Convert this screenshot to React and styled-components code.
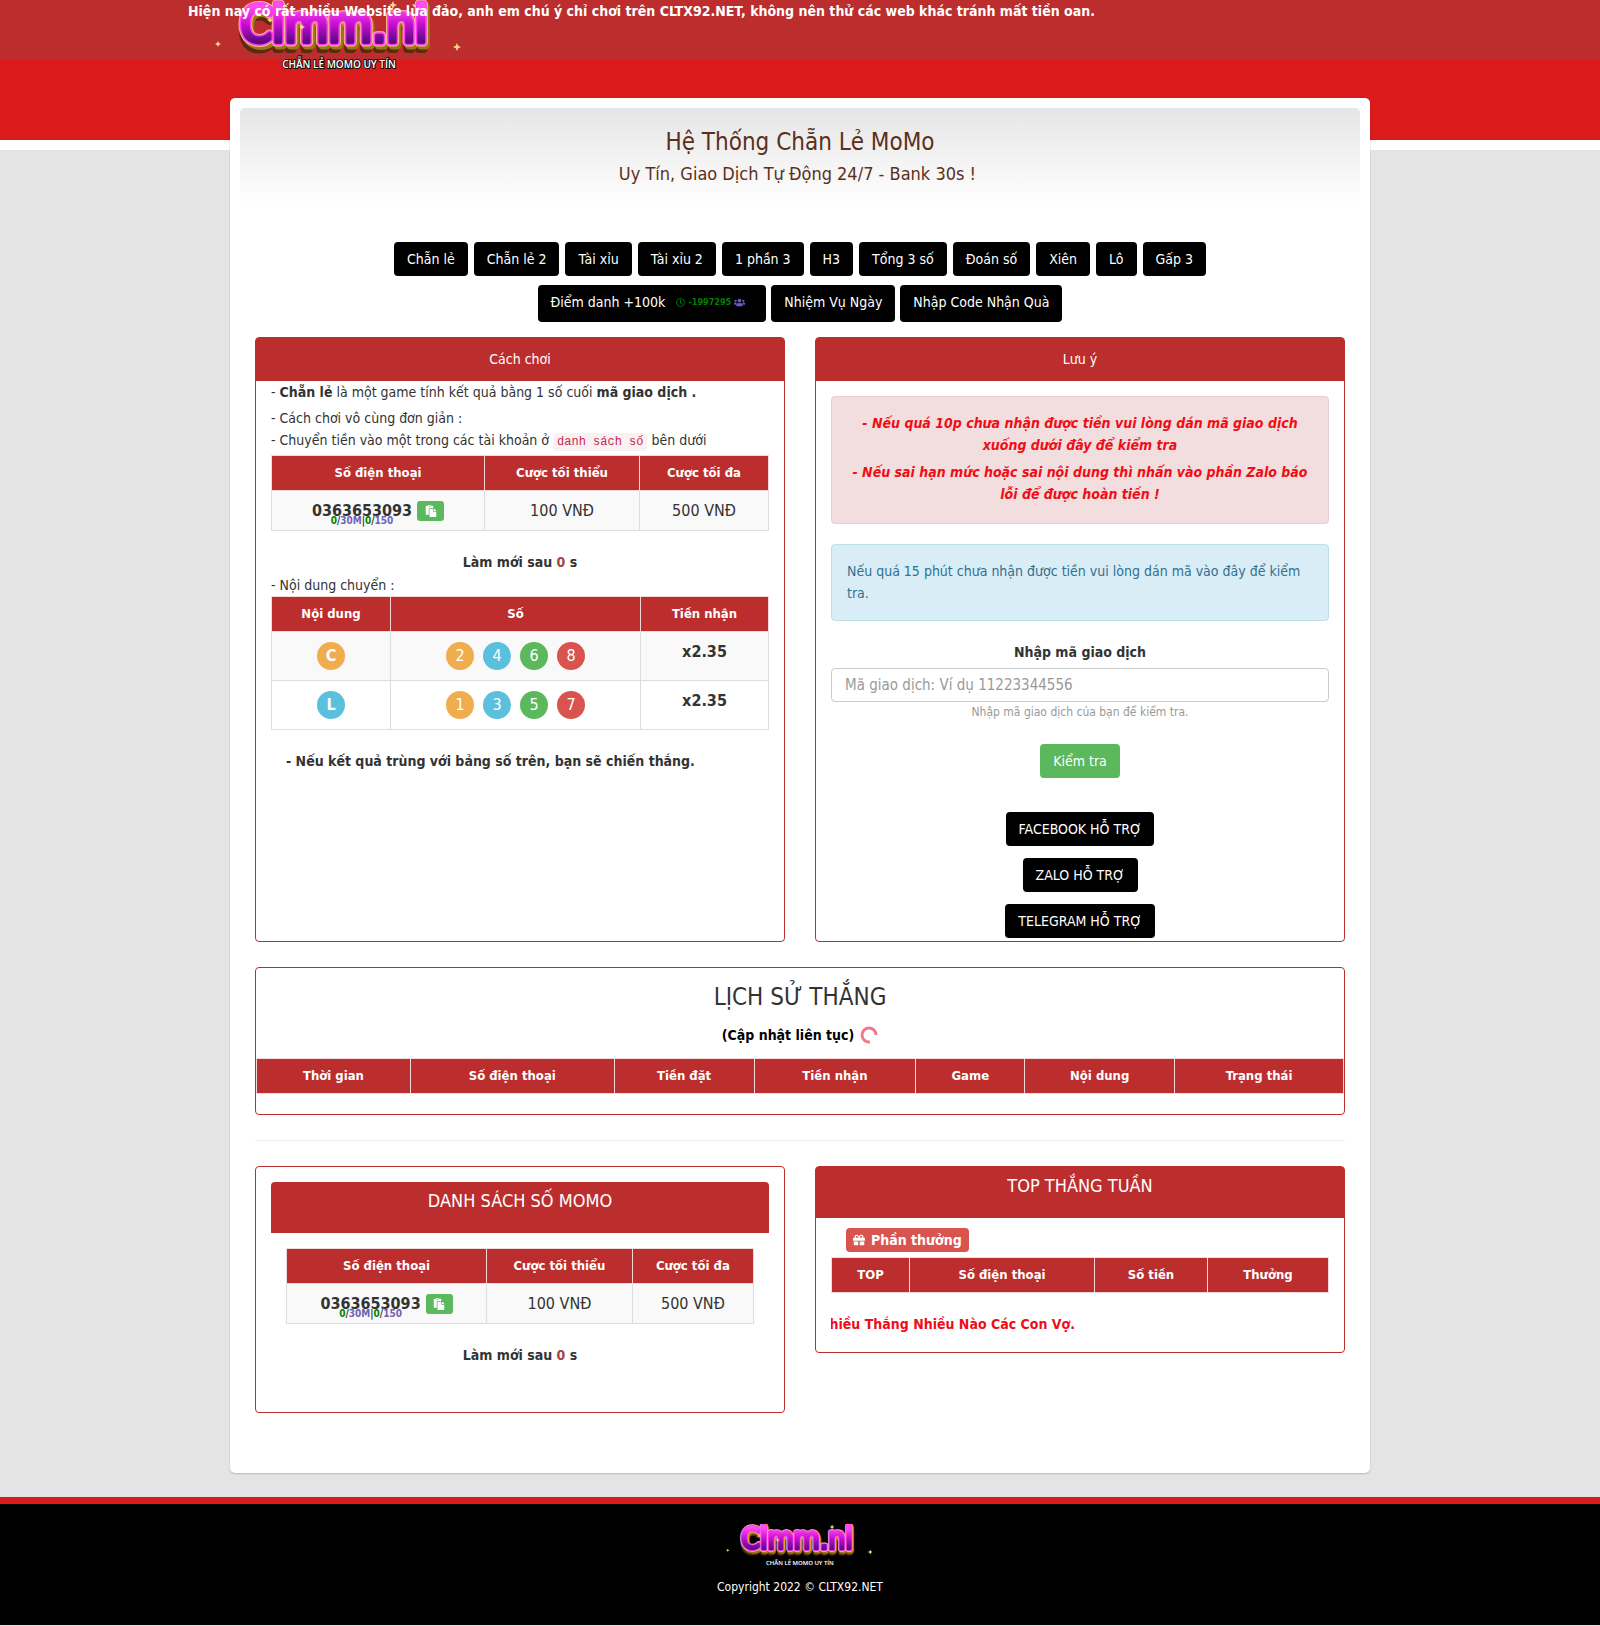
import React, { useId } from "react";
import styled, { createGlobalStyle, css } from "styled-components";
import { FaPaste, FaGift, FaUsers, FaRegClock } from "react-icons/fa";

const RED = "#bc2d2d";
const FONT = `"DejaVu Sans Condensed", "DejaVu Sans", sans-serif`;

const GlobalStyle = createGlobalStyle`
  *, *::before, *::after { box-sizing: border-box; }
  body {
    margin: 0;
    background: #e4e4e4;
    color: #333;
    font-family: ${FONT};
    font-size: 14px;
    line-height: 22px;
  }
  h1, h2, p { margin: 0; }
  h1, h2 { font-weight: 400; }
  button, input { font: inherit; }
`;

/* ---------- page frame ---------- */

const Header = styled.header`
  position: relative;
  height: 60px;
  background: ${RED};
`;

const HeaderLogo = styled.a`
  position: absolute;
  top: 0;
  left: calc(50% - 590px);
  z-index: 1;
  display: block;
  @media (max-width: 1200px) {
    left: 0;
  }
`;

const Notice = styled.p`
  position: absolute;
  inset: 0 0 auto;
  z-index: 2;
  padding-left: 188px;
  overflow: hidden;
  white-space: nowrap;
  color: #fff;
  font-weight: 700;
`;

const Band = styled.div`
  height: 90px;
  background: #db1b1b;
  border-bottom: 10px solid #fff;
`;

const Main = styled.main`
  position: relative;
  max-width: 1140px;
  margin: -52px auto 24px;
  padding: 10px 10px 60px;
  background: #fff;
  border-radius: 5px;
  box-shadow: 0 1px 2px rgba(0, 0, 0, 0.2);
`;

const Hero = styled.section`
  padding: 20px 15px;
  border-top: 1px solid #e0e4ea;
  border-radius: 5px 5px 0 0;
  background: linear-gradient(#e6e6e6, #fff);
  text-align: center;
  color: #5c2f1a;
`;

const HeroTitle = styled.h1`
  font-size: 24px;
  line-height: 26px;
`;

const HeroText = styled.p`
  margin-top: 6px;
  font-size: 18px;
  line-height: 26px;
`;

/* ---------- buttons ---------- */

const Games = styled.nav`
  display: grid;
  gap: 9px;
  padding: 35px 15px 15px;
`;

const ButtonRow = styled.div`
  display: flex;
  flex-wrap: wrap;
  justify-content: center;
  gap: ${(p) => p.$gap}px;
`;

const Button = styled.button`
  display: flex;
  align-items: flex-start;
  gap: 11px;
  padding: 6px 13px ${(p) => (p.$tall ? 9 : 6)}px;
  border: 0;
  border-radius: 4px;
  background: ${(p) => (p.$green ? "#5cb85c" : "#000")};
  color: #fff;
  cursor: pointer;
`;

const Countdown = styled.span`
  display: flex;
  align-items: center;
  gap: 3px;
  padding-right: 8px;
  color: green;
  font-size: 9px;
  font-weight: 700;
  svg:last-child {
    color: slateblue;
  }
`;

/* ---------- panels ---------- */

const Columns = styled.div`
  display: grid;
  grid-template-columns: 1fr 1fr;
  align-items: ${(p) => p.$align || "stretch"};
  gap: 30px;
  padding: 0 15px;
  @media (max-width: 800px) {
    grid-template-columns: 1fr;
  }
`;

const Panel = styled.section`
  min-width: 0;
  border: 1px solid ${RED};
  border-radius: 4px;
  background: #fff;
`;

const WidePanel = styled(Panel)`
  margin: 25px 15px;
  padding-bottom: 20px;
  text-align: center;
`;

const PanelHeading = styled.h2`
  padding: ${(p) => (p.$large ? "8px 15px 21px" : "10px 15px 11px")};
  border-radius: ${(p) => (p.$inset ? "4px 4px 0 0" : "2px 2px 0 0")};
  background: ${RED};
  color: #fff;
  text-align: center;
  font-size: ${(p) => (p.$large ? 18 : 14)}px;
`;

const PanelBody = styled.div`
  padding: ${(p) => p.$pad || "0 15px"};
`;

const Lines = styled.div`
  padding: 4px 0;
`;

const Code = styled.code`
  padding: 2px 4px;
  border-radius: 4px;
  background: #f9f2f4;
  color: #c7254e;
  font-family: "Liberation Mono", monospace;
  font-size: 12px;
  line-height: 12px;
`;

const Centered = styled.p`
  margin-bottom: 1px;
  text-align: center;
  font-weight: 700;
`;

const Seconds = styled.span`
  color: #a94442;
`;

const Result = styled.p`
  padding: 0 15px;
  font-weight: 700;
`;

/* ---------- tables ---------- */

const Table = styled.table`
  width: 100%;
  margin-bottom: ${(p) => p.$after ?? 20}px;
  border-collapse: collapse;
  table-layout: fixed;
  text-align: center;
  th,
  td {
    padding: 0 8px;
    border: 1px solid #ddd;
  }
  th {
    height: 35px;
    border-color: #f3d9d9;
    background: ${RED};
    color: #fff;
    font-size: 13px;
    font-weight: 700;
  }
  td {
    height: ${(p) => p.$row || 40}px;
    font-size: 16px;
  }
  tbody tr:nth-child(odd) {
    background: #f9f9f9;
  }
`;

const PhoneLine = styled.div`
  display: flex;
  justify-content: center;
  align-items: center;
  gap: 5px;
  height: 20px;
`;

const Phone = styled.div`
  position: relative;
`;

const Limits = styled.small`
  position: absolute;
  inset: 15px 0 auto;
  font-size: 10px;
  line-height: 12px;
  font-weight: 700;
  white-space: nowrap;
  i {
    color: green;
    font-style: normal;
  }
  em {
    color: #6f62b5;
    font-style: normal;
  }
`;

const CopyButton = styled.button`
  display: grid;
  place-items: center;
  width: 27px;
  height: 20px;
  padding: 0;
  border: 0;
  border-radius: 3px;
  background: #5cb85c;
  color: #fff;
  font-size: 12px;
`;

const Circles = styled.div`
  display: flex;
  justify-content: center;
  gap: 9px;
`;

const tones = { orange: "#f0ad4e", blue: "#5bc0de", green: "#5cb85c", red: "#d9534f" };

const Circle = styled.span`
  width: 28px;
  height: 28px;
  border-radius: 50%;
  background: ${(p) => tones[p.$tone]};
  color: #fff;
  line-height: 28px;
  font-weight: ${(p) => (p.$bold ? 700 : 400)};
`;

const Payout = styled.td`
  && {
    padding-bottom: 9px;
  }
  font-weight: 700;
`;

/* ---------- notes and form ---------- */

const Alert = styled.div`
  margin-bottom: 20px;
  padding: ${(p) => (p.$danger ? "15px 20px" : "15px")};
  border: 1px solid ${(p) => (p.$danger ? "#e8ccd0" : "#bce0ea")};
  border-radius: 4px;
  background: ${(p) => (p.$danger ? "#f2dede" : "#d9edf7")};
  color: ${(p) => (p.$danger ? "#f00d16" : "#31708f")};
  ${(p) =>
    p.$danger &&
    css`
      text-align: center;
      font-weight: 700;
      font-style: italic;
    `}
  p + p {
    margin-top: 5px;
  }
  p:last-child {
    margin-bottom: ${(p) => (p.$danger ? 3 : 1)}px;
  }
`;

const Form = styled.form`
  display: flex;
  flex-direction: column;
  align-items: center;
  label {
    margin-bottom: 5px;
    font-weight: 700;
  }
  small {
    margin-bottom: 22px;
    color: #999;
    font-size: 12px;
    line-height: 20px;
  }
`;

const Input = styled.input`
  width: 100%;
  height: 34px;
  padding: 6px 13px;
  border: 1px solid #ccc;
  border-radius: 4px;
  background: #fff;
  color: #555;
  font-size: 15px;
  &::placeholder {
    color: #999;
    opacity: 1;
  }
`;

const Support = styled.div`
  display: flex;
  flex-direction: column;
  align-items: center;
  gap: 12px;
  margin-top: 34px;
  padding-bottom: 3px;
`;

/* ---------- history ---------- */

const HistoryTitle = styled.h2`
  padding-top: 15px;
  font-size: 24px;
  line-height: 28px;
`;

const Updating = styled.p`
  display: flex;
  justify-content: center;
  align-items: center;
  gap: 6px;
  margin: 13px 0 12px;
  color: #000;
  font-weight: 700;
`;

const Rule = styled.hr`
  margin: 0 15px 25px;
  border: 0;
  border-top: 1px solid #eee;
`;

const Reward = styled.button`
  display: flex;
  align-items: center;
  gap: 6px;
  height: 24px;
  margin: 0 15px 5px;
  padding: 0 7px;
  border: 0;
  border-radius: 4px;
  background: #d9534f;
  color: #fff;
  font-weight: 700;
`;

const Ticker = styled.p`
  overflow: hidden;
  white-space: nowrap;
  text-indent: -12px;
  color: #f00d16;
  font-weight: 700;
`;

const Footer = styled.footer`
  display: flex;
  flex-direction: column;
  align-items: center;
  gap: 7px;
  padding: 20px 15px 27px;
  border-top: 7px solid #db1b1b;
  background: #000;
  color: #fff;
  font-size: 12px;
`;

/* ---------- drawings ---------- */

const Star = ({ x, y, r = 4 }) => (
  <path
    d={`M${x} ${y - r}l${r * 0.3} ${r * 0.7}l${r * 0.7} ${r * 0.3}l${-r * 0.7} ${r * 0.3}l${-r * 0.3} ${r * 0.7}l${-r * 0.3} ${-r * 0.7}l${-r * 0.7} ${-r * 0.3}l${r * 0.7} ${-r * 0.3}z`}
    fill="#ffd98a"
  />
);

function Logo({ width }) {
  const id = useId();
  const word = {
    x: 124,
    y: 42,
    textAnchor: "middle",
    fontFamily: '"DejaVu Sans Condensed", "DejaVu Sans", sans-serif',
    fontSize: 50,
    strokeLinejoin: "round",
    strokeLinecap: "round",
  };
  return (
    <svg width={width} viewBox="0 0 260 76" role="img" aria-label="Clmm.nl">
      <defs>
        <linearGradient id={id} gradientUnits="userSpaceOnUse" x1="0" y1="2" x2="0" y2="46">
          <stop offset="0.1" stopColor="#ff4df2" />
          <stop offset="0.5" stopColor="#c60fd0" />
          <stop offset="0.9" stopColor="#5c0a86" />
        </linearGradient>
      </defs>
      <text {...word} y={49} fill="#5b2a0c" stroke="#5b2a0c" strokeWidth="8">Clmm.nl</text>
      <text {...word} x={126} y={45} fill="#9a7a10" stroke="#9a7a10" strokeWidth="9">Clmm.nl</text>
      <text {...word} fill="#ffb98f" stroke="#ffb98f" strokeWidth="9">Clmm.nl</text>
      <text {...word} fill="#ff3df0" stroke="#ff3df0" strokeWidth="7">Clmm.nl</text>
      <text {...word} fill={`url(#${id})`} stroke={`url(#${id})`} strokeWidth="4">Clmm.nl</text>
      <Star x={8} y={44} r={3} />
      <Star x={247} y={47} r={4} />
      <Star x={60} y={20} r={3} />
      <Star x={92} y={27} r={3} />
      <Star x={183} y={5} r={4} />
      <text
        x="129"
        y="68"
        textAnchor="middle"
        fontFamily='"Open Sans", sans-serif'
        fontWeight="600"
        fontSize="10"
        fill="#fff"
        stroke="#111"
        strokeWidth="2"
        paintOrder="stroke"
      >
        CHẴN LẺ MOMO UY TÍN
      </text>
    </svg>
  );
}

const Spinner = () => (
  <svg width="18" height="18" viewBox="0 0 18 18" fill="none" stroke="#f4788c" strokeWidth="3" aria-hidden="true">
    <path d="M10 15.9A7 7 0 1 1 16 9" />
  </svg>
);

/* ---------- parts ---------- */

const games = ["Chẵn lẻ", "Chẵn lẻ 2", "Tài xỉu", "Tài xỉu 2", "1 phần 3", "H3", "Tổng 3 số", "Đoán số", "Xiên", "Lô", "Gấp 3"];

const rows = [
  { code: "C", tone: "orange", numbers: [2, 4, 6, 8] },
  { code: "L", tone: "blue", numbers: [1, 3, 5, 7] },
];

const history = [
  ["Thời gian", 154],
  ["Số điện thoại", 204],
  ["Tiền đặt", 140],
  ["Tiền nhận", 162],
  ["Game", 109],
  ["Nội dung", 150],
  ["Trạng thái", 169],
];

function Head({ columns }) {
  const total = columns.reduce((sum, [, w]) => sum + w, 0);
  return (
    <>
      <colgroup>
        {columns.map(([name, w]) => (
          <col key={name} style={{ width: `${(w / total) * 100}%` }} />
        ))}
      </colgroup>
      <thead>
        <tr>
          {columns.map(([name]) => (
            <th key={name} scope="col">{name}</th>
          ))}
        </tr>
      </thead>
    </>
  );
}

const PhoneTable = () => (
  <Table>
    <Head columns={[["Số điện thoại", 213], ["Cược tối thiểu", 155], ["Cược tối đa", 129]]} />
    <tbody>
      <tr>
        <td>
          <PhoneLine>
            <Phone>
              <b>0363653093</b>
              <Limits>
                <i>0</i>/<em>30M</em>|<i>0</i>/<em>150</em>
              </Limits>
            </Phone>
            <CopyButton type="button" aria-label="Sao chép">
              <FaPaste />
            </CopyButton>
          </PhoneLine>
        </td>
        <td>100 VNĐ</td>
        <td>500 VNĐ</td>
      </tr>
    </tbody>
  </Table>
);

const Refresh = () => (
  <Centered>
    Làm mới sau <Seconds>0</Seconds> s
  </Centered>
);

export default function App() {
  return (
    <>
      <GlobalStyle />
      <Header>
        <HeaderLogo href="#">
          <Logo width={260} />
        </HeaderLogo>
        <Notice>
          Hiện nay có rất nhiều Website lừa đảo, anh em chú ý chỉ chơi trên CLTX92.NET, không nên thử các web khác tránh mất tiền oan.
        </Notice>
      </Header>
      <Band />
      <Main>
        <Hero>
          <HeroTitle>Hệ Thống Chẵn Lẻ MoMo</HeroTitle>
          <HeroText>Uy Tín, Giao Dịch Tự Động 24/7 - Bank 30s !&nbsp;</HeroText>
        </Hero>

        <Games>
          <ButtonRow $gap={6}>
            {games.map((g) => (
              <Button key={g} type="button">{g}</Button>
            ))}
          </ButtonRow>
          <ButtonRow $gap={5}>
            <Button type="button" $tall>
              Điểm danh +100k
              <Countdown>
                <FaRegClock size={9} />
                -1997295
                <FaUsers size={11} />
              </Countdown>
            </Button>
            <Button type="button" $tall>Nhiệm Vụ Ngày</Button>
            <Button type="button" $tall>Nhập Code Nhận Quà</Button>
          </ButtonRow>
        </Games>

        <Columns>
          <Panel>
            <PanelHeading>Cách chơi</PanelHeading>
            <PanelBody>
              <p>
                - <b>Chẵn lẻ</b> là một game tính kết quả bằng 1 số cuối <b>mã giao dịch .</b>
              </p>
              <Lines>
                <p>- Cách chơi vô cùng đơn giản :</p>
                <p>
                  - Chuyển tiền vào một trong các tài khoản ở <Code>danh sách số</Code> bên dưới
                </p>
              </Lines>
              <PhoneTable />
              <Refresh />
              <p>- Nội dung chuyển :</p>
              <Table $row={49}>
                <Head columns={[["Nội dung", 119], ["Số", 250], ["Tiền nhận", 128]]} />
                <tbody>
                  {rows.map((r) => (
                    <tr key={r.code}>
                      <td>
                        <Circles>
                          <Circle $tone={r.tone} $bold>{r.code}</Circle>
                        </Circles>
                      </td>
                      <td>
                        <Circles>
                          {r.numbers.map((n, i) => (
                            <Circle key={n} $tone={Object.keys(tones)[i]}>{n}</Circle>
                          ))}
                        </Circles>
                      </td>
                      <Payout>x2.35</Payout>
                    </tr>
                  ))}
                </tbody>
              </Table>
              <Result>- Nếu kết quả trùng với bảng số trên, bạn sẽ chiến thắng.</Result>
            </PanelBody>
          </Panel>

          <Panel>
            <PanelHeading>Lưu ý</PanelHeading>
            <PanelBody $pad="15px 15px 0">
              <Alert $danger>
                <p>- Nếu quá 10p chưa nhận được tiền vui lòng dán mã giao dịch xuống dưới đây để kiểm tra</p>
                <p>- Nếu sai hạn mức hoặc sai nội dung thì nhấn vào phần Zalo báo lỗi để được hoàn tiền !</p>
              </Alert>
              <Alert>
                <p>Nếu quá 15 phút chưa nhận được tiền vui lòng dán mã vào đây để kiểm tra.</p>
              </Alert>
              <Form onSubmit={(e) => e.preventDefault()}>
                <label htmlFor="trade">Nhập mã giao dịch</label>
                <Input id="trade" type="text" placeholder="Mã giao dịch: Ví dụ 11223344556" />
                <small>Nhập mã giao dịch của bạn để kiểm tra.</small>
                <Button type="submit" $green>Kiểm tra</Button>
              </Form>
              <Support>
                <Button type="button">FACEBOOK HỖ TRỢ</Button>
                <Button type="button">ZALO HỖ TRỢ</Button>
                <Button type="button">TELEGRAM HỖ TRỢ</Button>
              </Support>
            </PanelBody>
          </Panel>
        </Columns>

        <WidePanel>
          <HistoryTitle>LỊCH SỬ THẮNG</HistoryTitle>
          <Updating>
            (Cập nhật liên tục) <Spinner />
          </Updating>
          <Table $after={0}>
            <Head columns={history} />
          </Table>
        </WidePanel>

        <Rule />

        <Columns $align="start">
          <Panel>
            <PanelBody $pad="15px 15px 45px">
              <PanelHeading $large $inset>DANH SÁCH SỐ MOMO</PanelHeading>
              <PanelBody $pad="15px 15px 0">
                <PhoneTable />
                <Refresh />
              </PanelBody>
            </PanelBody>
          </Panel>
          <Panel>
            <PanelHeading $large>TOP THẮNG TUẦN</PanelHeading>
            <PanelBody $pad="10px 15px 17px">
              <Reward type="button">
                <FaGift size={12} />
                Phần thưởng
              </Reward>
              <Table>
                <Head columns={[["TOP", 78], ["Số điện thoại", 185], ["Số tiền", 113], ["Thưởng", 121]]} />
              </Table>
              <Ticker>Nhiều Thắng Nhiều Nào Các Con Vợ.</Ticker>
            </PanelBody>
          </Panel>
        </Columns>
      </Main>
      <Footer>
        <Logo width={155} />
        <p>Copyright 2022 © CLTX92.NET</p>
      </Footer>
    </>
  );
}
